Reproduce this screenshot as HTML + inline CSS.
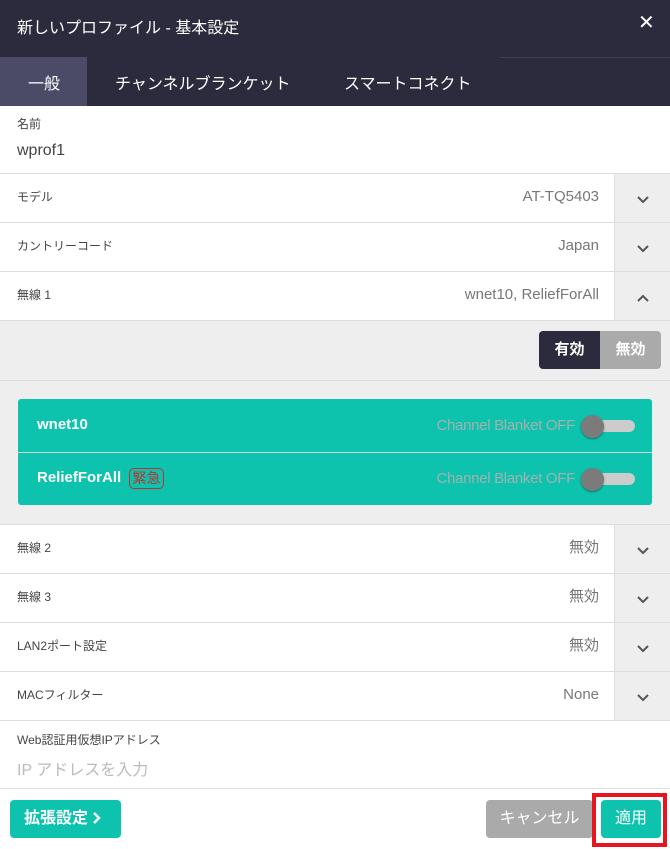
<!DOCTYPE html>
<html><head><meta charset="utf-8"><style>
*{box-sizing:border-box;margin:0;padding:0}
body{width:670px;height:849px;background:#fff;font-family:"Liberation Sans","Noto Sans CJK JP",sans-serif;position:relative;overflow:hidden;color:#333}
.a{position:absolute}
.row{position:absolute;left:0;width:670px;height:49px;border-bottom:1px solid #ddd;background:#fff}
.row .l{position:absolute;left:17px;top:0;line-height:46px;font-size:12px;color:#444}
.row .v{position:absolute;right:71px;top:0;line-height:46px;font-size:15px;color:#777}
.row .c{position:absolute;right:0;top:0;width:56px;height:48px;background:#eee;border-left:1px solid #ddd}
.row .c svg{position:absolute;left:22px;top:22px}
.tg{position:absolute;right:35px;width:54px;height:22px}
.tg .t{position:absolute;left:6px;top:5px;width:48px;height:12px;border-radius:6px;background:#ccc}
.tg .k{position:absolute;left:0;top:0;width:23px;height:23px;border-radius:50%;background:#7b7b7b;box-shadow:0 1px 2px rgba(0,0,0,.4)}
.cb{position:absolute;right:95px;font-size:15px;color:#a5b0ae;letter-spacing:-0.3px}
</style></head><body>
<div class="a" style="left:0;top:0;width:670px;height:106px;background:#2b2b3d"></div>
<div class="a" style="left:17px;top:14px;font-size:16px;color:#fff">新しいプロファイル - 基本設定</div>
<div class="a" style="left:638px;top:10px;font-size:20px;color:#fff">✕</div>
<div class="a" style="left:0;top:57px;width:87px;height:49px;background:#4b4b67"></div>
<div class="a" style="left:500px;top:57px;width:170px;height:1px;background:#3e3e52"></div>
<div class="a" style="left:28px;top:70px;font-size:16px;color:#fff">一般</div>
<div class="a" style="left:115px;top:70px;font-size:16px;color:#fff">チャンネルブランケット</div>
<div class="a" style="left:344px;top:70px;font-size:16px;color:#fff">スマートコネクト</div>
<div class="a" style="left:0;top:106px;width:670px;height:68px;border-bottom:1px solid #ddd"></div>
<div class="a" style="left:17px;top:115px;font-size:12px;color:#444">名前</div>
<div class="a" style="left:17px;top:142px;font-size:16px;color:#444">wprof1</div>
<div class="row" style="top:174px"><div class="l">モデル</div><div class="v">AT-TQ5403</div><div class="c"><svg width="12" height="8"><path d="M1 1l5 5 5-5" stroke="#555" stroke-width="2" fill="none"/></svg></div></div>
<div class="row" style="top:223px"><div class="l">カントリーコード</div><div class="v">Japan</div><div class="c"><svg width="12" height="8"><path d="M1 1l5 5 5-5" stroke="#555" stroke-width="2" fill="none"/></svg></div></div>
<div class="row" style="top:272px"><div class="l">無線 1</div><div class="v">wnet10, ReliefForAll</div><div class="c"><svg width="12" height="8"><path d="M1 7l5-5 5 5" stroke="#555" stroke-width="2" fill="none"/></svg></div></div>
<div class="a" style="left:0;top:321px;width:670px;height:204px;background:#eee"></div>
<div class="a" style="left:0;top:380px;width:670px;height:1px;background:#ddd"></div>
<div class="a" style="left:539px;top:331px;width:61px;height:38px;background:#2b2b3d;border-radius:4px 0 0 4px;color:#fff;font-size:15px;font-weight:bold;text-align:center;line-height:38px">有効</div>
<div class="a" style="left:600px;top:331px;width:61px;height:38px;background:#aaa;border-radius:0 4px 4px 0;color:#fff;font-size:15px;font-weight:bold;text-align:center;line-height:38px">無効</div>
<div class="a" style="left:18px;top:399px;width:634px;height:106px;background:#0dc3ad;border-radius:3px"></div>
<div class="a" style="left:18px;top:452px;width:634px;height:1px;background:#c8d8d5"></div>
<div class="a" style="left:37px;top:416px;font-size:15px;font-weight:bold;color:#fff">wnet10</div>
<div class="cb" style="top:417px">Channel Blanket OFF</div>
<div class="tg" style="top:415px"><div class="t"></div><div class="k"></div></div>
<div class="a" style="left:37px;top:469px;font-size:15px;font-weight:bold;color:#fff">ReliefForAll</div>
<div class="a" style="left:129px;top:468px;width:35px;height:21px;border:1px solid #b33;border-radius:5px;color:#b33;font-size:14px;line-height:19px;text-align:center">緊急</div>
<div class="cb" style="top:470px">Channel Blanket OFF</div>
<div class="tg" style="top:468px"><div class="t"></div><div class="k"></div></div>
<div class="a" style="left:0;top:524px;width:670px;height:1px;background:#ddd"></div>
<div class="row" style="top:525px"><div class="l">無線 2</div><div class="v">無効</div><div class="c"><svg width="12" height="8"><path d="M1 1l5 5 5-5" stroke="#555" stroke-width="2" fill="none"/></svg></div></div>
<div class="row" style="top:574px"><div class="l">無線 3</div><div class="v">無効</div><div class="c"><svg width="12" height="8"><path d="M1 1l5 5 5-5" stroke="#555" stroke-width="2" fill="none"/></svg></div></div>
<div class="row" style="top:623px"><div class="l">LAN2ポート設定</div><div class="v">無効</div><div class="c"><svg width="12" height="8"><path d="M1 1l5 5 5-5" stroke="#555" stroke-width="2" fill="none"/></svg></div></div>
<div class="row" style="top:672px"><div class="l">MACフィルター</div><div class="v">None</div><div class="c"><svg width="12" height="8"><path d="M1 1l5 5 5-5" stroke="#555" stroke-width="2" fill="none"/></svg></div></div>
<div class="a" style="left:17px;top:731px;font-size:12px;color:#444">Web認証用仮想IPアドレス</div>
<div class="a" style="left:17px;top:756px;font-size:16px;color:#bbb">IP アドレスを入力</div>
<div class="a" style="left:0;top:788px;width:670px;height:1px;background:#ddd"></div>
<div class="a" style="left:10px;top:800px;width:111px;height:38px;background:#0dc3ad;border-radius:4px;color:#fff;font-size:16px;font-weight:bold;line-height:38px;padding-left:14px">拡張設定 <svg width="9" height="12" style="vertical-align:-1px"><path d="M2 1l5 5-5 5" stroke="#fff" stroke-width="2.4" fill="none"/></svg></div>
<div class="a" style="left:486px;top:800px;width:107px;height:38px;background:#aaa;border-radius:4px;color:#fff;font-size:16px;line-height:38px;text-align:center">キャンセル</div>
<div class="a" style="left:592px;top:793px;width:75px;height:54px;border:4px solid #e8141e"></div>
<div class="a" style="left:601px;top:800px;width:60px;height:38px;background:#0dc3ad;border-radius:4px;color:#fff;font-size:16px;line-height:38px;text-align:center">適用</div>
</body></html>
